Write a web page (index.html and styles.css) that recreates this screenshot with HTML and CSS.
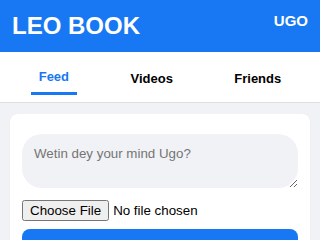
FILE: index.html
```html
<!DOCTYPE html>
<html lang="en">
<head>
    <meta charset="UTF-8">
    <meta name="viewport" content="width=device-width, initial-scale=1.0">
    <title>Leo Book</title>
    <link rel="stylesheet" href="styles.css">
</head>
<body>
    <header class="top-bar">
        <h1>LEO BOOK</h1>
        <span class="user-name">UGO</span>
    </header>

    <nav class="tabs">
        <a href="#" class="tab active">Feed</a>
        <a href="#" class="tab">Videos</a>
        <a href="#" class="tab">Friends</a>
    </nav>

    <main class="content">
        <div class="post-box">
            <form id="postForm">
                <textarea id="postText" name="postText" placeholder="Wetin dey your mind Ugo?"></textarea>
                <input type="file" id="postImage" name="postImage" class="file-input">
                <button type="submit" class="post-btn">Post</button>
            </form>
        </div>
    </main>
</body>
</html>
```

FILE: styles.css
```css
* {
    margin: 0;
    padding: 0;
    box-sizing: border-box;
    font-family: 'Liberation Sans', Arial, sans-serif;
}

body {
    background-color: #f0f2f5;
}

.top-bar {
    background-color: #1877f2;
    color: white;
    padding: 12px;
    display: flex;
    justify-content: space-between;
}

.top-bar h1 {
    font-size: 24px;
}

.user-name {
    font-size: 15px;
    font-weight: bold;
}

.tabs {
    background-color: white;
    display: flex;
    justify-content: space-around;
    align-items: center;
    padding: 9px 8px 7px;
    border-bottom: 1px solid #dddfe2;
}

.tab {
    color: black;
    text-decoration: none;
    font-size: 13px;
    font-weight: bold;
    padding: 8px;
}

.tab.active {
    color: #1877f2;
    border-bottom: 3px solid #1877f2;
}

.content {
    padding: 11px 10px;
}

.post-box {
    background-color: white;
    border-radius: 8px;
    padding: 20px 12px 12px;
    box-shadow: 0 1px 2px rgba(0, 0, 0, 0.05);
}

.post-box textarea {
    display: block;
    width: 100%;
    padding: 12px;
    border: none;
    border-radius: 20px;
    background-color: #f0f2f5;
    font-size: 13.333px;
    resize: vertical;
    margin-bottom: 12px;
}

.file-input {
    display: block;
    font-size: 13.333px;
    margin-bottom: 8px;
}

.post-btn {
    width: 100%;
    padding: 12px;
    background-color: #1877f2;
    color: white;
    border: none;
    border-radius: 8px;
    font-size: 1rem;
    font-weight: bold;
    cursor: pointer;
}
```
